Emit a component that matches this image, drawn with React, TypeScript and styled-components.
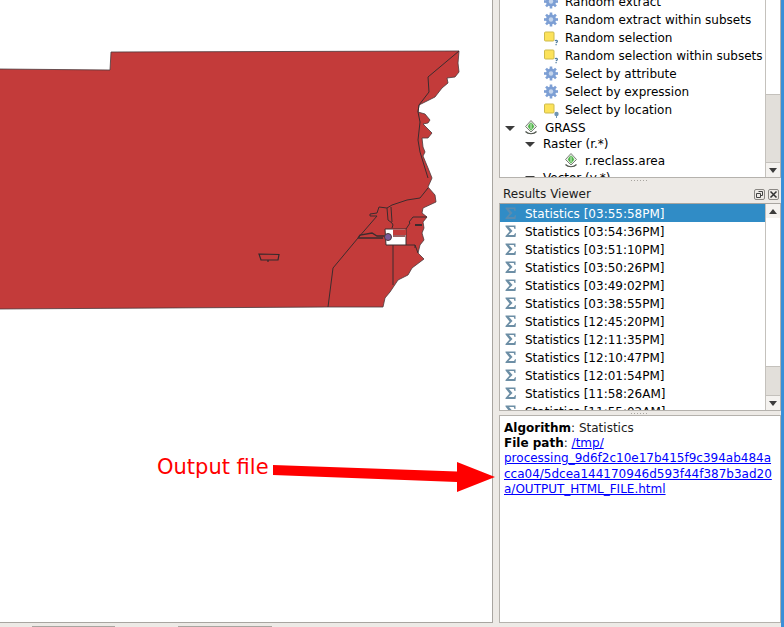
import React from 'react';
import styled, { createGlobalStyle } from 'styled-components';

const GlobalStyle = createGlobalStyle`
    html, body {
        margin: 0;
        padding: 0;
        background: #edeae6;
    }
    body {
        font-family: "DejaVu Sans", sans-serif;
        font-size: 12px;
        color: #000;
    }
`;

const Window = styled.div`
    position: relative;
    width: 784px;
    height: 627px;
    overflow: hidden;
    display: grid;
    grid-template-columns: 494px 287px 3px;
    grid-template-rows: 624px 3px;
    background: #edeae6;
`;

const MapCanvas = styled.div`
    grid-column: 1;
    grid-row: 1;
    background: #fff;
    border-right: 1px solid #a8a5a0;
    border-bottom: 1px solid #a8a5a0;
    margin-bottom: 1px;
    margin-right: 1px;
    overflow: hidden;
    svg {
        display: block;
    }
`;

const Dock = styled.div`
    grid-column: 2;
    grid-row: 1;
    min-width: 0;
    display: flex;
    flex-direction: column;
    padding: 0 0 0 5px;
`;

const Edge = styled.div`
    grid-column: 3;
    grid-row: 1 / 3;
    background: #3a8fd8;
`;

const BottomTabs = styled.div`
    grid-column: 1 / 3;
    grid-row: 2;
    display: flex;
    gap: 63px;
    padding-left: 32px;
`;

const BottomTab = styled.div<{ $width: number }>`
    width: ${(p) => p.$width}px;
    height: 1px;
    margin-top: 2px;
    background: #a8a5a0;
`;

const Frame = styled.div`
    display: flex;
    border: 1px solid #b5b2ad;
    border-top-color: #a8a5a0;
    background: #fff;
    overflow: hidden;
`;

const TreeFrame = styled(Frame)`
    flex: none;
    box-sizing: border-box;
    height: 178px;
    border-top: none;
`;

const ListFrame = styled(Frame)`
    flex: none;
    box-sizing: border-box;
    height: 208px;
`;

const Rows = styled.div`
    flex: 1;
    min-width: 0;
    overflow: hidden;
`;

const TreeRows = styled(Rows)`
    margin-top: -7px;
`;

const TreeRow = styled.div<{ $indent: number; $height?: number }>`
    display: flex;
    align-items: center;
    height: ${(p) => p.$height ?? 18}px;
    padding-left: ${(p) => p.$indent}px;
    white-space: nowrap;
    svg {
        flex: none;
    }
`;

const Twisty = styled.span`
    flex: none;
    width: 0;
    height: 0;
    margin-right: 8px;
    border-left: 5px solid transparent;
    border-right: 5px solid transparent;
    border-top: 5px solid #3c3c3c;
`;

const RowLabel = styled.span<{ $gap: number }>`
    margin-left: ${(p) => p.$gap}px;
`;

const ListRow = styled.div<{ $selected?: boolean }>`
    display: flex;
    align-items: center;
    height: 18px;
    padding-left: 5px;
    white-space: nowrap;
    background: ${(p) => (p.$selected ? '#308cc6' : 'transparent')};
    color: ${(p) => (p.$selected ? '#fff' : '#000')};
`;

const ListLabel = styled.span`
    margin-left: 6px;
    padding-top: 2px;
`;

const ScrollBar = styled.div`
    flex: none;
    width: 14px;
    display: flex;
    flex-direction: column;
    background: #fff;
    border-left: 1px solid #c4c1bc;
`;

const ScrollSpace = styled.div<{ $grow: number }>`
    flex: ${(p) => p.$grow} 0 0;
`;

const ScrollThumb = styled.div<{ $grow: number }>`
    flex: ${(p) => p.$grow} 0 0;
    background: #e2dfda;
    border-top: 1px solid #c4c1bc;
    border-bottom: 1px solid #c4c1bc;
`;

const ScrollButton = styled.div<{ $down?: boolean }>`
    flex: none;
    height: 14px;
    display: flex;
    align-items: center;
    justify-content: center;
    background: #f4f2ef;
    &::after {
        content: '';
        width: 0;
        height: 0;
        border-left: 4px solid transparent;
        border-right: 4px solid transparent;
        ${(p) => (p.$down ? 'border-top: 5px solid #3c3c3c;' : 'border-bottom: 5px solid #3c3c3c;')}
    }
`;

const Grip = styled.div`
    flex: none;
    height: 4px;
    display: flex;
    justify-content: center;
    align-items: center;
    &::after {
        content: '';
        width: 18px;
        height: 1px;
        background: repeating-linear-gradient(90deg, #a8a5a0 0 1px, transparent 1px 3px);
    }
`;

const PanelTitle = styled.div`
    flex: none;
    height: 21px;
    padding: 3px 2px 0 4px;
    box-sizing: border-box;
    display: flex;
    align-items: center;
    justify-content: space-between;
    color: #1c1c1c;
`;

const TitleButtons = styled.div`
    display: flex;
    gap: 3px;
`;

const TitleButton = styled.div`
    box-sizing: border-box;
    width: 11px;
    height: 11px;
    border: 1px solid #8a8783;
    border-radius: 2px;
    display: flex;
    align-items: center;
    justify-content: center;
    svg {
        display: block;
    }
`;

const Details = styled.div`
    flex: 1;
    min-height: 0;
    margin-bottom: 1px;
    border: 1px solid #b5b2ad;
    background: #fff;
    padding: 5px 4px;
    line-height: 15.2px;
    word-break: break-all;
    color: #1c1c1c;
    b {
        color: #000;
    }
`;

const FileLink = styled.a`
    color: #0000ff;
    text-decoration: underline;
`;

const Annotation = styled.svg`
    position: absolute;
    left: 0;
    top: 0;
    pointer-events: none;
`;

const AnnotationText = styled.div`
    position: absolute;
    left: 157px;
    top: 454px;
    font-size: 21px;
    line-height: 26px;
    color: #ff0000;
`;

const Gear = () => (
    <svg width="16" height="16" viewBox="0 0 16 16">
        <g transform="translate(-1 -0.5)">
            <g fill="#7d9fd4">
                <circle cx="8" cy="8" r="5" />
                {[0, 45, 90, 135, 180, 225, 270, 315].map((angle) => (
                    <rect key={angle} x="6.7" y="1" width="2.6" height="3.2" transform={`rotate(${angle} 8 8)`} />
                ))}
            </g>
            <circle cx="8" cy="8" r="2.2" fill="#c5d5ec" />
        </g>
    </svg>
);

const SelectIcon = ({ pin }: { pin?: boolean }) => (
    <svg width="16" height="16" viewBox="0 0 16 16">
        <rect x="0.5" y="2" width="9.5" height="9" rx="1" fill="#fce25a" stroke="#cdbb4c" />
        {pin ? (
            <g fill="#6f94b4">
                <circle cx="12.500" cy="12" r="2.200" />
                <rect x="12" y="13" width="1" height="3" />
            </g>
        ) : (
            <path d="M11 10.800c.6-.7 2.500-.6 2.400.6-.1.8-1.200.8-1.300 1.700M12.100 14v1.300" fill="none" stroke="#4f7ca0" strokeWidth="1.200" />
        )}
    </svg>
);

const GrassIcon = () => (
    <svg width="16" height="16" viewBox="0 0 16 16">
        <path d="M8 0.500l5.500 6L8 12 2.500 6.500z" fill="#e8ece6" stroke="#7b8278" />
        <path d="M8 2.500c1.800 1.500 3 3 3 4.400L8 10.500 5 6.900C5 5.500 6.200 4 8 2.500z" fill="#4fb548" />
        <path d="M8 3.500v5.500" stroke="#d8efd2" strokeWidth="1" />
        <path d="M2.500 11.500c2.500 3 8.500 3 11 0" fill="none" stroke="#4f554d" strokeWidth="1.200" />
    </svg>
);

const Sigma = ({ selected }: { selected?: boolean }) => (
    <svg width="14" height="16" viewBox="0 0 14 16">
        <path
            d="M0.500 2.500H10.500V6H9.500L8.800 4H4L7.500 8 3.500 12H9L10 10.300H11L10.500 14H0.500V13L4.500 8.600 0.500 3.500z"
            fill={selected ? '#5a8cb0' : '#6c8ea5'}
        />
    </svg>
);

const treeRows = [
    { kind: 'gear', label: 'Random extract' },
    { kind: 'gear', label: 'Random extract within subsets' },
    { kind: 'select', label: 'Random selection' },
    { kind: 'select', label: 'Random selection within subsets' },
    { kind: 'gear', label: 'Select by attribute' },
    { kind: 'gear', label: 'Select by expression' },
    { kind: 'pin', label: 'Select by location' },
];

const results = [
    '03:55:58PM', '03:54:36PM', '03:51:10PM', '03:50:26PM', '03:49:02PM', '03:38:55PM',
    '12:45:20PM', '12:11:35PM', '12:10:47PM', '12:01:54PM', '11:58:26AM', '11:55:02AM',
];

const coast =
    'M-2 69 L110 70 L111 52 L459 51 L458 63 L459 72 L455 77 L447 78 L448 83 L442 88 L435 97 L427 101 L419 105 L418 112 L425 114 L430 120 L428 123 L423 124 L432 133 L428 138 L422 138 L423 147 L425 152 L423 156 L428 168 L432 178 L428 187 L435 195 L436 202 L423 208 L422 213 L427 217 L423 222 L424 228 L422 233 L424 240 L420 245 L418 253 L424 259 L412 268 L408 275 L398 280 L390 292 L385 298 L383 307 L328 307 L-2 309 Z';

const App = () => (
    <>
        <GlobalStyle />
        <Window>
            <MapCanvas>
                <svg width="492" height="622" viewBox="0 0 492 622">
                    <path d={coast} fill="#c33b3a" stroke="#4a3a3c" strokeWidth="0.8" />
                    <g fill="none" stroke="#3c2c2e" strokeWidth="1">
                        <path d="M459 51L428 77 L429 92 L419 105 L418 112 L420 122 L418 140 L420 152 L428 178" />
                        <path d="M328 307L333 268 L358 238 L377 216 L370 216 L370 214 L377 213 L379 207 L387 208 L392 205 L407 200 L420 198 L428 188" />
                        <path d="M387 208L388 220 L392 223 L393 225 L392 228 M391 207L392 222 M393 245L393 285" />
                        <path d="M406 229L410 223 L409 222 L413 217 L427 217 M406 245H415L418 253 M415 245L415 248" />
                        <path d="M358 238L360 235 L372 233 L377 236 L385 236 M358 238H383" strokeWidth="1.300" />
                        <path d="M415 225H422" strokeWidth="2" />
                    </g>
                    <path d="M385 229H406V245H386z" fill="#fff" stroke="#3c2c2e" />
                    <path d="M393 229.500H406V235H393z" fill="#c33b3a" />
                    <path d="M393 236H405" stroke="#7a2a2c" strokeWidth="1.500" />
                    <circle cx="388" cy="237" r="3.500" fill="#7a5a9a" stroke="#4a3a3c" />
                    <path d="M259 254L279 254.500 L278 260 L261 260z M268 260V262" fill="none" stroke="#332a2c" strokeWidth="1.200" />
                </svg>
            </MapCanvas>
            <Dock>
                <TreeFrame>
                    <TreeRows>
                        {treeRows.map((row) => (
                            <TreeRow $indent={44} key={row.label}>
                                {row.kind === 'gear' ? <Gear /> : <SelectIcon pin={row.kind === 'pin'} />}
                                <RowLabel $gap={5}>{row.label}</RowLabel>
                            </TreeRow>
                        ))}
                        <TreeRow $indent={5}>
                            <Twisty />
                            <GrassIcon />
                            <RowLabel $gap={6}>GRASS</RowLabel>
                        </TreeRow>
                        <TreeRow $indent={25} $height={14}>
                            <Twisty />
                            <RowLabel $gap={0}>Raster (r.*)</RowLabel>
                        </TreeRow>
                        <TreeRow $indent={63} $height={19}>
                            <GrassIcon />
                            <RowLabel $gap={6}>r.reclass.area</RowLabel>
                        </TreeRow>
                        <TreeRow $indent={25} $height={16}>
                            <Twisty />
                            <RowLabel $gap={0}>Vector (v.*)</RowLabel>
                        </TreeRow>
                    </TreeRows>
                    <ScrollBar>
                        <ScrollSpace $grow={95} />
                        <ScrollThumb $grow={68} />
                        <ScrollButton $down />
                    </ScrollBar>
                </TreeFrame>
                <Grip />
                <PanelTitle>
                    Results Viewer
                    <TitleButtons>
                        <TitleButton>
                            <svg width="9" height="9" viewBox="0 0 9 9">
                                <path d="M3.500 1.500h4v4H6M1.500 3.500h4v4h-4z" fill="none" stroke="#444" />
                            </svg>
                        </TitleButton>
                        <TitleButton>
                            <svg width="9" height="9" viewBox="0 0 9 9">
                                <path d="M1.500 1.500l6 6M7.500 1.500l-6 6" fill="none" stroke="#333" strokeWidth="1.500" />
                            </svg>
                        </TitleButton>
                    </TitleButtons>
                </PanelTitle>
                <ListFrame>
                    <Rows>
                        {results.map((time, index) => (
                            <ListRow $selected={index === 0} key={time}>
                                <Sigma selected={index === 0} />
                                <ListLabel>Statistics [{time}]</ListLabel>
                            </ListRow>
                        ))}
                    </Rows>
                    <ScrollBar>
                        <ScrollButton />
                        <ScrollSpace $grow={151} />
                        <ScrollThumb $grow={28} />
                        <ScrollButton $down />
                    </ScrollBar>
                </ListFrame>
                <Grip />
                <Details>
                    <b>Algorithm</b>: Statistics
                    <br />
                    <b>File path</b>:{' '}
                    <FileLink href="#">
                        /tmp/
                        <br />
                        processing_9d6f2c10e17b415f9c394ab484acca04/5dcea144170946d593f44f387b3ad20a/OUTPUT_HTML_FILE.html
                    </FileLink>
                </Details>
            </Dock>
            <Edge />
            <BottomTabs>
                <BottomTab $width={83} />
                <BottomTab $width={94} />
            </BottomTabs>
            <Annotation width="784" height="627" viewBox="0 0 784 627">
                <path d="M273 465L457 471.500V462L495 477L457 492V482L273 475z" fill="#ff0000" />
            </Annotation>
            <AnnotationText>Output file</AnnotationText>
        </Window>
    </>
);

export default App;
